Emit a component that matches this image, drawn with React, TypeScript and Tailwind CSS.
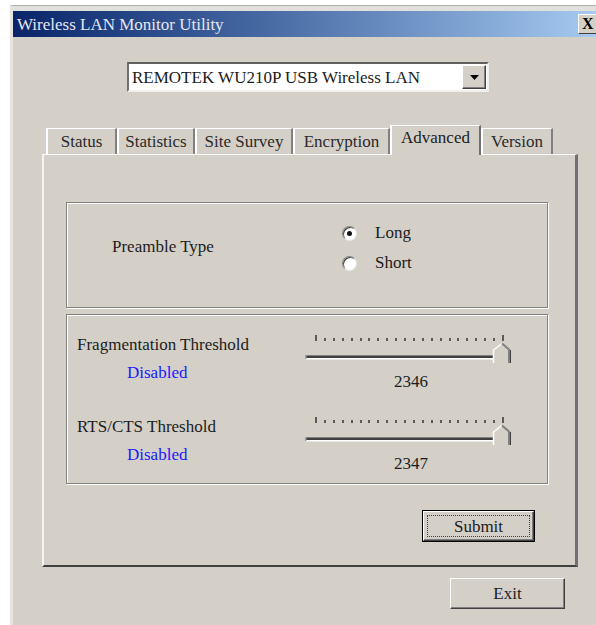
import React, { useState } from 'react';

const raised =
  'border border-t-white border-l-white border-r-[#404040] border-b-[#404040] shadow-[inset_-1px_-1px_0_#808080]';
const etched = 'border border-[#808080] shadow-[1px_1px_0_white,inset_1px_1px_0_white]';

const tabs = [
  { label: 'Status', w: 'w-[71px]' },
  { label: 'Statistics', w: 'w-[78px]' },
  { label: 'Site Survey', w: 'w-[98px]' },
  { label: 'Encryption', w: 'w-[97px]' },
  { label: 'Advanced', w: 'w-[91px]' },
  { label: 'Version', w: 'w-[72px]' },
];

// Trackbar: tick row, sunken channel and the pointed thumb
const Trackbar: React.FC = () => {
  const ticks = Array.from({ length: 22 }, (_, i) => 10 + (i * 187) / 21);
  return (
    <svg width="206" height="30" viewBox="0 0 206 30">
      {ticks.map((x, i) => (
        <rect
          key={i}
          x={Math.round(x)}
          y={i === 0 || i === ticks.length - 1 ? 1 : 4}
          width="2"
          height={i === 0 || i === ticks.length - 1 ? 6 : 3}
          fill="#5a5a5a"
        />
      ))}
      <rect x="1" y="21" width="190" height="1" fill="#808080" />
      <rect x="1" y="22" width="190" height="2" fill="#404040" />
      <rect x="1" y="24" width="190" height="1.5" fill="#ffffff" />
      <rect x="0" y="21" width="1.5" height="4" fill="#a0a0a0" />
      <polygon points="188,29 188,16 197,9 205,16 205,29" fill="#d4d0c8" />
      <polyline points="188.5,29 188.5,16 197,9.5" fill="none" stroke="#ffffff" strokeWidth="1.5" />
      <polyline points="197,9.5 204,15.5 204,29" fill="none" stroke="#808080" strokeWidth="2" />
      <line x1="205.5" y1="16" x2="205.5" y2="29" stroke="#404040" strokeWidth="1" />
    </svg>
  );
};

const Radio: React.FC<{ checked: boolean; label: string; onClick: () => void }> = ({
  checked,
  label,
  onClick,
}) => (
  <button onClick={onClick} className="flex items-center h-[30px]">
    <span className="w-[15px] h-[15px] rounded-full bg-white border border-t-[#808080] border-l-[#808080] border-r-[#e6e6e6] border-b-[#e6e6e6] shadow-[inset_1px_1px_0_#404040] flex items-center justify-center">
      {checked && <span className="w-[5px] h-[5px] rounded-full bg-[#111]" />}
    </span>
    <span className="ml-[18px]">{label}</span>
  </button>
);

const ThresholdRow: React.FC<{ label: string; value: string }> = ({ label, value }) => (
  <div className="flex h-[82px]">
    <div className="w-[238px] pl-[10px] pt-[20px] flex flex-col">
      <span className="leading-[20px]">{label}</span>
      <span className="leading-[20px] mt-[8px] ml-[50px] text-[#1a1aff]">Disabled</span>
    </div>
    <div className="pt-[19px] flex flex-col items-center w-[206px]">
      <Trackbar />
      <span className="leading-[20px] mt-[8px] ml-[6px]">{value}</span>
    </div>
  </div>
);

export default function App() {
  const [preamble, setPreamble] = useState<'long' | 'short'>('long');

  return (
    <div className="w-[596px] h-[625px] bg-white pt-[5px] pl-[10px] overflow-hidden text-[17px] text-[#1c1c1c] [font-family:Liberation_Serif,Times_New_Roman,serif]">
      <div className="h-[620px] bg-[#d4d0c8] border-t border-t-[#b0b0b0] border-l-[3px] border-l-[#e6e4e0]">
        <div className="h-[5px] bg-[#e2e0dc]" />

        {/* Title bar */}
        <div className="h-[26px] flex items-center justify-between bg-gradient-to-r from-[#0a246a] to-[#a6caf0]">
          <span className="pl-[4px] text-[#e4e7f0] leading-none">Wireless LAN Monitor Utility</span>
          <div className="w-[18px] h-[20px] bg-[#d4d0c8] border-t border-l border-b border-t-white border-l-white border-b-[#404040] flex items-center pl-[3px] font-bold text-[16px] text-black leading-none">
            X
          </div>
        </div>

        {/* Adapter selector */}
        <div className="mt-[25px] ml-[114px] w-[362px] h-[30px] bg-white border-2 border-t-[#606060] border-l-[#707070] border-r-[#f0f0f0] border-b-[#f0f0f0] flex items-center">
          <span className="pl-[3px] flex-1 leading-none whitespace-nowrap">REMOTEK WU210P USB Wireless LAN</span>
          <div className={`w-[24px] h-[24px] mr-[1px] bg-[#d4d0c8] ${raised} flex items-center justify-center`}>
            <svg width="9" height="5" viewBox="0 0 9 5">
              <polygon points="0,0 9,0 4.5,5" fill="#000" />
            </svg>
          </div>
        </div>

        {/* Tab strip */}
        <div className="mt-[33px] ml-[29px] w-[536px]">
          <div className="flex items-end h-[29px] pl-[4px]">
            {tabs.map((t) =>
              t.label === 'Advanced' ? (
                <div
                  key={t.label}
                  className={`${t.w} h-[30px] -mb-[1px] relative z-10 bg-[#d4d0c8] border-t border-l-2 border-r-2 border-t-white border-l-white border-r-[#707070] flex items-start justify-center pt-[2px] leading-[20px]`}
                >
                  {t.label}
                </div>
              ) : (
                <div
                  key={t.label}
                  className={`${t.w} h-[26px] border-t border-l-2 border-r-2 border-t-white border-l-white border-r-[#808080] flex items-center justify-center leading-[20px] text-[#2a2a2a]`}
                >
                  {t.label}
                </div>
              )
            )}
          </div>

          {/* Advanced page */}
          <div className="h-[413px] border-t border-l-2 border-t-white border-l-[#f4f4f4] border-r-[3px] border-r-[#707070] border-b-2 border-b-[#404040] pl-[22px] pt-[47px]">
            <div className={`w-[482px] h-[106px] ${etched} flex`}>
              <div className="w-[275px] pl-[45px] pt-[34px] leading-[20px]">Preamble Type</div>
              <div className="pt-[15px] flex flex-col">
                <Radio checked={preamble === 'long'} label="Long" onClick={() => setPreamble('long')} />
                <Radio checked={preamble === 'short'} label="Short" onClick={() => setPreamble('short')} />
              </div>
            </div>

            <div className={`mt-[6px] w-[482px] h-[170px] ${etched}`}>
              <ThresholdRow label="Fragmentation Threshold" value="2346" />
              <ThresholdRow label="RTS/CTS Threshold" value="2347" />
            </div>

            <div className="mt-[26px] ml-[356px] w-[113px] h-[32px] border border-black">
              <button className={`w-full h-full bg-[#d4d0c8] ${raised} p-[3px]`}>
                <span className="w-full h-full border border-dotted border-[#404040] flex items-center justify-center leading-none">
                  Submit
                </span>
              </button>
            </div>
          </div>
        </div>

        {/* Footer */}
        <div className="mt-[11px] ml-[437px]">
          <button className={`w-[115px] h-[31px] bg-[#d4d0c8] ${raised} flex items-center justify-center leading-none`}>
            Exit
          </button>
        </div>
      </div>
    </div>
  );
}
